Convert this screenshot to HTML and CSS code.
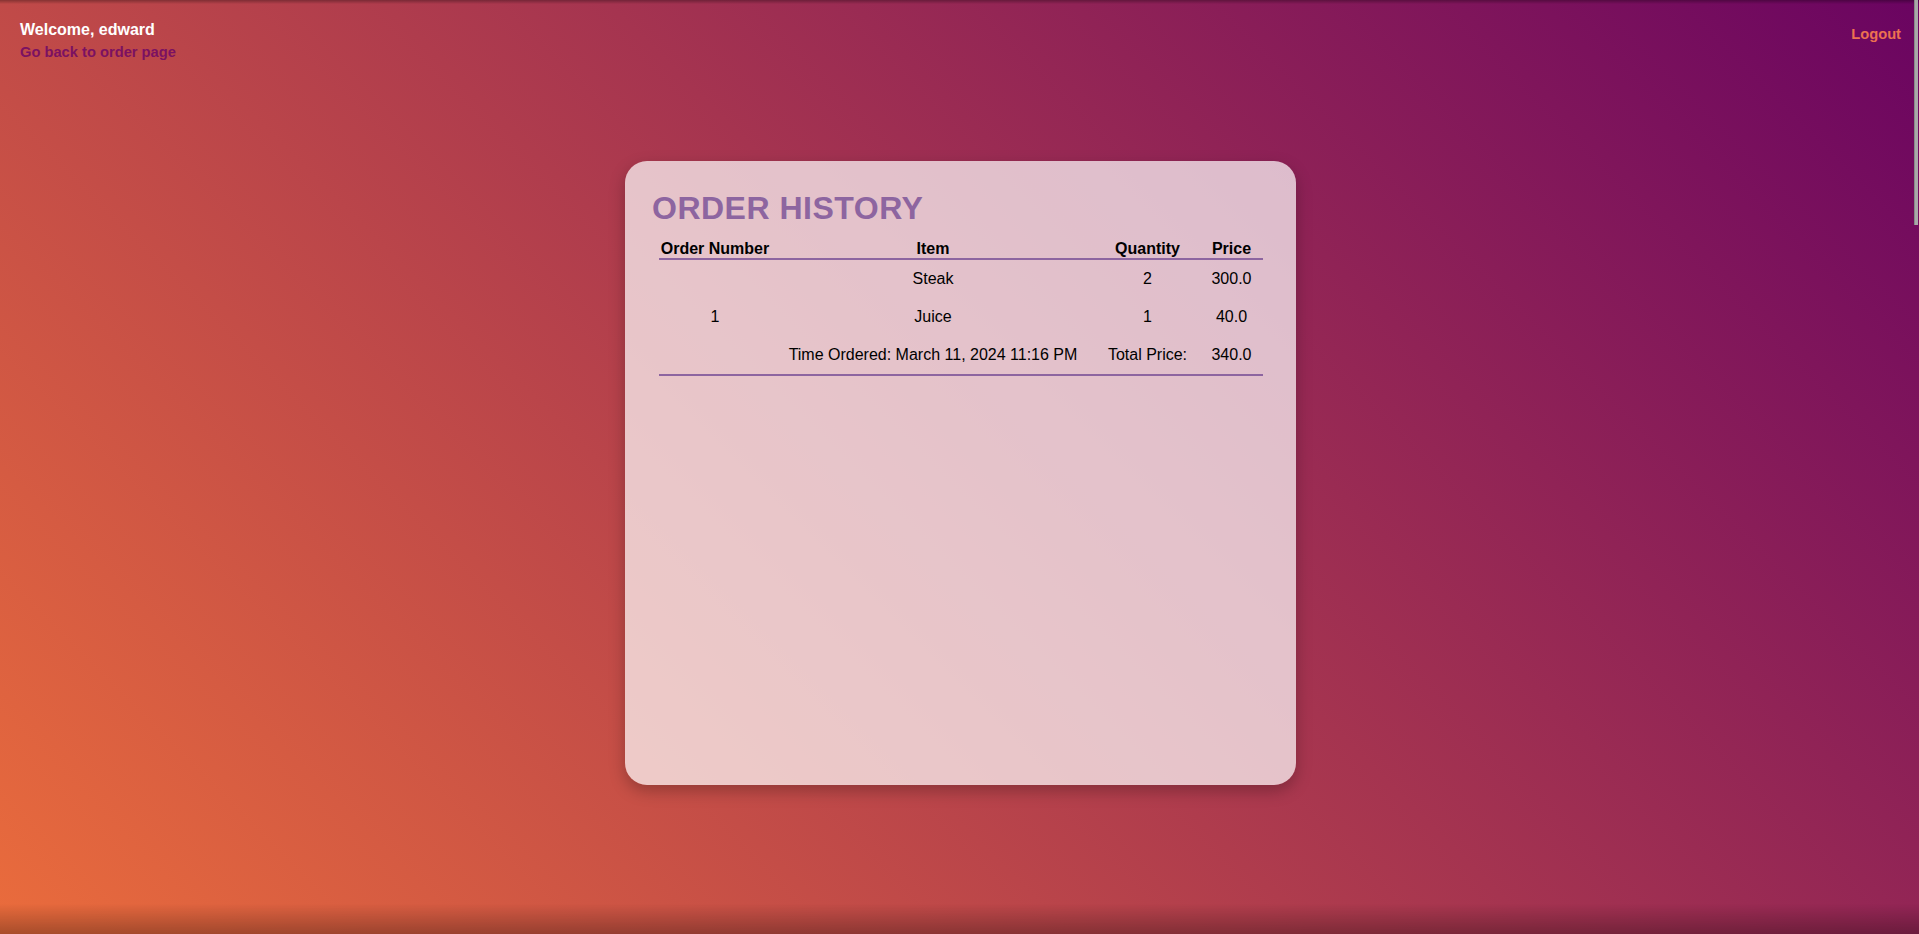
FILE: index.html
```html
<!DOCTYPE html>
<html lang="en">
<head>
<meta charset="utf-8">
<title>Order History</title>
<link rel="stylesheet" href="styles.css">
</head>
<body>
<div class="page">
  <header class="topbar">
    <div class="user">
      <div class="welcome">Welcome, edward</div>
      <a class="back-link" href="#">Go back to order page</a>
    </div>
    <a class="logout" href="#">Logout</a>
  </header>

  <main class="card">
    <h1 class="card-title">ORDER HISTORY</h1>
    <table class="orders">
      <colgroup>
        <col class="c-num">
        <col class="c-item">
        <col class="c-qty">
        <col class="c-price">
      </colgroup>
      <thead>
        <tr>
          <th>Order Number</th>
          <th>Item</th>
          <th>Quantity</th>
          <th>Price</th>
        </tr>
      </thead>
      <tbody>
        <tr>
          <td></td>
          <td>Steak</td>
          <td>2</td>
          <td>300.0</td>
        </tr>
        <tr>
          <td>1</td>
          <td>Juice</td>
          <td>1</td>
          <td>40.0</td>
        </tr>
        <tr class="summary">
          <td></td>
          <td>Time Ordered: March 11, 2024 11:16 PM</td>
          <td>Total Price:</td>
          <td>340.0</td>
        </tr>
      </tbody>
    </table>
  </main>
</div>
<div class="scroll-thumb"></div>
</body>
</html>
```

FILE: styles.css
```css
html, body {
  margin: 0;
  padding: 0;
  height: 100%;
}

body {
  font-family: "Liberation Sans", Arial, sans-serif;
  background: linear-gradient(45deg, #ea6c3c 0%, #6a0461 100%);
  color: #000;
  overflow: hidden;
}

body::before {
  content: "";
  position: fixed;
  left: 0;
  right: 0;
  top: 0;
  height: 4px;
  background: linear-gradient(to bottom, rgba(0, 0, 0, 0.3), rgba(0, 0, 0, 0));
  pointer-events: none;
}

body::after {
  content: "";
  position: fixed;
  left: 0;
  right: 0;
  bottom: 0;
  height: 30px;
  background: linear-gradient(to bottom, rgba(0, 0, 0, 0), rgba(0, 0, 0, 0.28));
  pointer-events: none;
}

.page {
  padding: 21px 18px 0 20px;
}

.topbar {
  display: flex;
  justify-content: space-between;
  align-items: flex-start;
}

.user {
  display: flex;
  flex-direction: column;
}

.welcome {
  font-size: 16px;
  line-height: 18px;
  font-weight: bold;
  color: #fff;
}

.back-link {
  margin-top: 5px;
  font-size: 14.7px;
  line-height: 16px;
  font-weight: bold;
  color: #7b1162;
  text-decoration: none;
}

.logout {
  margin-top: 5px;
  font-size: 14.7px;
  line-height: 16px;
  font-weight: bold;
  color: #ec7250;
  text-decoration: none;
}

.card {
  box-sizing: border-box;
  width: 671px;
  height: 624px;
  margin: 101px auto 0;
  padding: 29px 27px 27px;
  border-radius: 22px;
  background: rgba(255, 255, 255, 0.7);
  box-shadow: 0 6px 16px rgba(0, 0, 0, 0.25);
}

.card-title {
  margin: 0 0 13px;
  font-size: 32px;
  line-height: 37px;
  letter-spacing: 0.5px;
  font-weight: bold;
  color: #8d65a0;
}

.orders {
  width: 604px;
  margin: 0 auto;
  table-layout: fixed;
  border-collapse: separate;
  border-spacing: 0;
  font-size: 16px;
  line-height: 18px;
}

.c-num { width: 113px; }
.c-item { width: 323px; }
.c-qty { width: 106px; }
.c-price { width: 62px; }

.orders th {
  padding: 0;
  font-weight: bold;
  text-align: center;
  border-bottom: 2px solid #8d65a0;
}

.orders td {
  padding: 10px 0;
  text-align: center;
  white-space: nowrap;
}

.orders .summary td {
  border-bottom: 2px solid #8d65a0;
}

.scroll-thumb {
  position: fixed;
  top: 0;
  right: 1px;
  width: 3px;
  height: 225px;
  background: #a9a9a9;
  border-left: 1px solid #8a8a8a;
}
```
